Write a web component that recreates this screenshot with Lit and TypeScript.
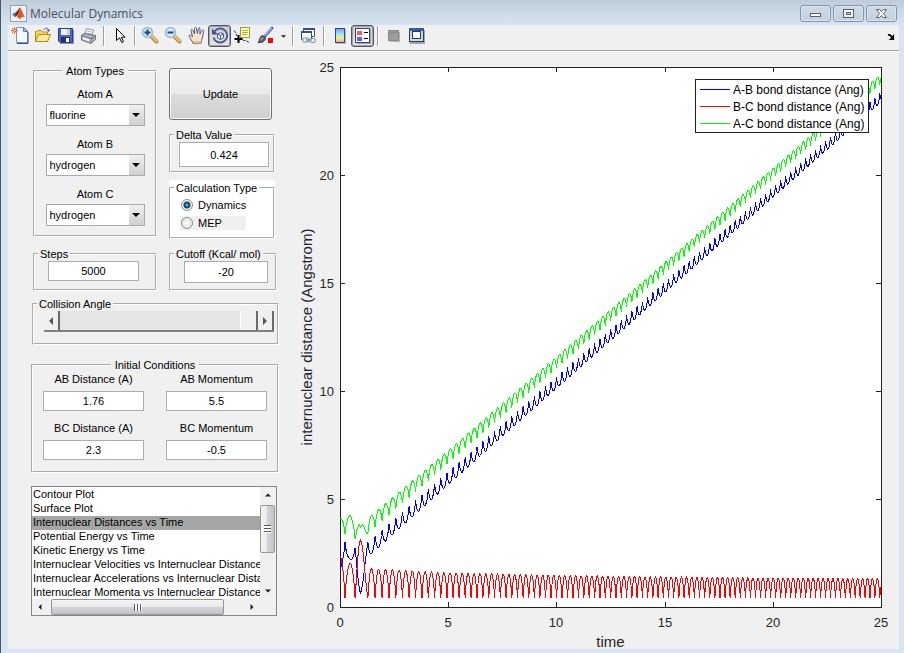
import { LitElement, html, svg, css } from "lit";
import { customElement, property, state } from "lit/decorators.js";
import { classMap } from "lit/directives/class-map.js";

/* ---------- toolbar icons, each on a 20 x 20 grid ---------- */
const icons: Record<string, unknown> = {
  new: svg`
    <path d="M6.500 1.500H14L17.500 5V16.500H6.500Z" fill="#f4f9ff" stroke="#7a94c8"/>
    <path d="M18 6V17.500H7" fill="none" stroke="#34507f"/>
    <path d="M13.500 1.500V5.500H17.500Z" fill="#a9c6ee" stroke="#5a78b8"/>
    <path d="M4.500 1V8M1 4.500H8M2 2L7 7M7 2L2 7" stroke="#e07038" stroke-width="1"/>
    <circle cx="4.500" cy="4.500" r="1.500" fill="#fff2c0" stroke="#d8572a"/>`,
  open: svg`
    <path d="M2.500 15.500V5.500H4L5 4.500H8L9.500 6H14.500V15.500Z" fill="#f5d66b" stroke="#b8860b"/>
    <path d="M2.500 15.500L5.500 8.500H17.500L14.500 15.500Z" fill="#ffec9a" stroke="#b8860b"/>
    <path d="M10.500 4C12 1.500 14.500 1.500 15.500 4" fill="none" stroke="#4a6a9a"/>
    <path d="M13.500 3.500H17.500L15.500 6Z" fill="#4a6a9a"/>`,
  save: svg`
    <path d="M2.500 2.500H16.500V16.500H4L2.500 15Z" fill="#4b63cc" stroke="#2b3c8f"/>
    <rect x="5" y="3" width="9" height="6" fill="#eef3ff"/>
    <rect x="11" y="3" width="3" height="6" fill="#c3d0f2"/>
    <rect x="5" y="11" width="9" height="5" fill="#26306e"/>
    <rect x="10" y="12" width="3" height="4" fill="#fff"/>
    <path d="M17.500 4V17.500H4" fill="none" stroke="#8c94b4"/>`,
  print: svg`
    <path d="M5.500 9L7.500 2.500L14.500 4L12.500 10Z" fill="#fff" stroke="#8a93a8"/>
    <path d="M8 5L12.500 6M7.500 7L12 8" stroke="#8fb0e0"/>
    <path d="M2.500 9.500L5 7.500L16.500 9.500V13.500L12 17.500L2.500 14Z" fill="#b4b6be" stroke="#6d7079"/>
    <path d="M2.500 9.500L12 12.500L16.500 9.500M12 12.500V17" fill="none" stroke="#6d7079"/>
    <path d="M4 12L10.500 14.500" stroke="#f4f4f4" stroke-width="2"/>
    <rect x="13" y="12" width="2" height="1" fill="#62a84e"/>`,
  pointer: svg`
    <path d="M6.500 2.500V14.500L9.500 11.800L11.800 16.500L13.500 15.600L11.400 11.200H15Z" fill="#fff" stroke="#000"/>`,
  zoomin: svg`
    <path d="M11 11L15.500 15.500" stroke="#b98a50" stroke-width="4" stroke-linecap="round"/>
    <path d="M11 10.500L15.500 15" stroke="#f8c070" stroke-width="2" stroke-linecap="round"/>
    <circle cx="6.500" cy="6.500" r="5" fill="#d3ecfa" stroke="#9ab8d4" stroke-width="1.500"/>
    <path d="M3.500 6.500H9.500M6.500 3.500V9.500" stroke="#1c4687" stroke-width="2"/>`,
  zoomout: svg`
    <path d="M11 11L15.500 15.500" stroke="#b98a50" stroke-width="4" stroke-linecap="round"/>
    <path d="M11 10.500L15.500 15" stroke="#f8c070" stroke-width="2" stroke-linecap="round"/>
    <circle cx="6.500" cy="6.500" r="5" fill="#d3ecfa" stroke="#9ab8d4" stroke-width="1.500"/>
    <path d="M3.500 6.500H9.500" stroke="#1c4687" stroke-width="2"/>`,
  pan: svg`
    <path d="M6 17.500C5.500 14.500 2 12 2 9.500C2.500 8.500 4 9 5.500 11L4 4.500C4 3 5.500 3 6 4.500L7.500 8L7.500 2.500C7.500 1 9.200 1 9.500 2.500L10.300 7.500L11.300 2.500C11.600 1.200 13.200 1.500 13 3L12.800 8L15 4.500C16 3.400 17 4.200 16.700 5.500L15.500 11C15 14 14 15 14 17.500Z" fill="#ffe3c4" stroke="#43609a"/>
    <path d="M6.500 17.500H14V15H6Z" fill="#f3b88a"/>`,
  rotate: svg`
    <path d="M4.500 5.500A7 7 0 1 1 3.500 11.500" fill="none" stroke="#4a6090" stroke-width="2"/>
    <path d="M2 2.500V8.500H8Z" fill="#3c5484"/>
    <path d="M7.500 8L10.500 6.500L13.500 8V12L10.500 13.500L7.500 12ZM7.500 8L10.500 9.500L13.500 8M10.500 9.500V13.500" fill="#eef2fa" stroke="#4a6090"/>`,
  datatip: svg`
    <path d="M1 4.500C2.500 6 3 8 4 10M6 14.500C9 11.500 10 15.500 13 14.500L16 16.500" fill="none" stroke="#2020ff" stroke-dasharray="3 1"/>
    <rect x="7.500" y="1.500" width="9" height="10" fill="#ffffb0" stroke="#a89a2c"/>
    <path d="M9 4.500H15M9 6.500H15M9 8.500H14" stroke="#b0a862"/>
    <path d="M5.500 9V17M1.500 13H9.500" stroke="#000" stroke-width="2"/>`,
  brush: svg`
    <path d="M8.500 10.500L16 2" stroke="#5a68ac" stroke-width="3" stroke-linecap="round"/>
    <path d="M8.500 9.500L15.500 2" stroke="#aebcf0" stroke-width="1.500"/>
    <path d="M2 16.500C4.500 14.500 3 11.500 6 9.500L9.500 12C9 15.500 5.500 17 2 16.500Z" fill="#666" stroke="#333"/>
    <path d="M5 14L7 11.500" stroke="#ddd"/>
    <rect x="12" y="12" width="5" height="5" fill="#f00"/>`,
  link: svg`
    <path d="M4.500 2.500H15.500V10.500H4.500Z" fill="#fff" stroke="#33508c"/><path d="M4 3H16" stroke="#33508c" stroke-width="2"/>
    <path d="M2.500 5.500H12.500V13.500H2.500Z" fill="#fff" stroke="#33508c"/><path d="M2 6H13" stroke="#33508c" stroke-width="2"/>
    <rect x="3.500" y="12" width="7" height="4" rx="2" fill="#eef4fa" stroke="#6a86a0"/>
    <rect x="10.500" y="12.500" width="6" height="4" rx="2" fill="#eef4fa" stroke="#6a86a0"/>
    <path d="M7 14H13" stroke="#8ba6bd" stroke-width="2"/>`,
  colorbar: svg`
    <rect x="6" y="3" width="10" height="15" fill="#b8b8bc"/>
    <rect x="5.500" y="2.500" width="9" height="14" fill="url(#spectrum)" stroke="#2e4a8c"/>`,
  legend: svg`
    <rect x="4" y="3" width="14" height="15" fill="#9fa3b0"/>
    <rect x="2.500" y="2.500" width="14" height="14" fill="#fff" stroke="#2e4a8c" />
    <rect x="4" y="5" width="5" height="4" fill="#ef6060"/><rect x="4" y="11" width="5" height="4" fill="#6060ef"/>
    <path d="M11 6.500H15M11 12.500H15" stroke="#000"/>`,
  hide: svg`
    <rect x="6" y="6" width="10" height="10" fill="#b4b4b4"/>
    <rect x="4.500" y="4.500" width="10" height="10" fill="#9c9c9c" stroke="#8a8a8a"/>
    <path d="M5 6.500H14" stroke="#8a8a8a"/>`,
  show: svg`
    <rect x="3" y="4" width="15" height="14" fill="#a0a4ac"/>
    <rect x="2.500" y="2.500" width="14" height="13" fill="#d3d7cc" stroke="#1f3b78"/>
    <path d="M2 3.500H17" stroke="#3a5a9e" stroke-width="3"/>
    <rect x="5.500" y="5.500" width="8" height="7" fill="#fff" stroke="#1f3b78"/>`,
};

/* ---------- trajectory of the collision ---------- */
const SPAN = 25;

interface Sample { t: number; ab: number; bc: number; ac: number; }

function interpolate(points: number[][], t: number): number {
  for (let i = 1; i < points.length; i++) {
    const [t0, v0] = points[i - 1];
    const [t1, v1] = points[i];
    if (t <= t1) return v0 + (v1 - v0) * ((t - t0) / (t1 - t0));
  }
  return points[points.length - 1][1];
}

function trajectory(): Sample[] {
  const centre = [[0, 2.91], [0.23, 3.19], [0.46, 3.24], [0.69, 2.98], [0.95, 2.15], [1.29, 3.2], [25, 24.02]];
  /* turning points of the B-C vibration */
  const turns = [-0.26, 0.23, 0.7, 1.29];
  let last = 1.29;
  while (last < SPAN) {
    last += 0.2 + 0.132 / (1 + (last - 1.29) / 6);
    turns.push(last);
  }
  const out: Sample[] = [];
  const steps = 12;
  for (let k = 0; k + 1 < turns.length; k++) {
    for (let j = 0; j < steps; j++) {
      const u = j / steps;
      const t = turns[k] + (turns[k + 1] - turns[k]) * u;
      if (t < 0 || t > SPAN) continue;
      let top = 1.24 + 0.55 / (1 + (t - 1.29) / 7) - 0.06 * (t / SPAN);
      let phase = u;
      let power = 0.75;
      if (k === 0) top = 2.4;
      if (k === 1) top = 2.03;
      if (k === 2) {
        top = 3.1;
        power = 1.4;
        phase = Math.pow(u, 0.81);
      }
      const bc = 0.4 + (top - 0.4) * Math.pow(Math.max(0, Math.sin(Math.PI * phase)), power);
      const mid = interpolate(centre, t);
      out.push({ t, bc, ab: mid - bc / 2, ac: mid + bc / 2 });
    }
  }
  return out;
}

@customElement("distance-chart")
class DistanceChart extends LitElement {
  static styles = css`
    :host { display: block; position: relative; min-width: 0; overflow: hidden; }
    svg { position: absolute; inset: 0; width: 100%; height: 100%; }
    text { font-family: "Liberation Sans", Arial, sans-serif; fill: #262626; }
    .tick { font-size: 13px; }
    .axis { font-size: 15px; }
    .key { font-size: 12px; fill: #000; }
    .frame { fill: #fff; stroke: #202020; shape-rendering: crispEdges; }
    .mark { stroke: #202020; shape-rendering: crispEdges; }
    .trace { fill: none; shape-rendering: crispEdges; }
    .ab { stroke: #0000ff; }
    .bc { stroke: #ff0000; }
    .ac { stroke: #00ff00; }
  `;
  @state() private w = 609;
  @state() private h = 597;
  private data = trajectory();
  private watcher = new ResizeObserver(([e]) => {
    this.w = Math.round(e.contentRect.width);
    this.h = Math.round(e.contentRect.height);
  });
  connectedCallback() { super.connectedCallback(); this.watcher.observe(this); }
  disconnectedCallback() { super.disconnectedCallback(); this.watcher.disconnect(); }

  render() {
    const left = 50, top = 15, right = this.w - 18, bottom = this.h - 42;
    const X = (t: number) => left + (t / SPAN) * (right - left);
    const Y = (v: number) => bottom - (v / SPAN) * (bottom - top);
    const line = (key: "ab" | "bc" | "ac") =>
      this.data.map((d) => `${X(d.t).toFixed(1)},${Y(d[key]).toFixed(1)}`).join(" ");
    const ticks = [0, 5, 10, 15, 20, 25];
    const keys = [["ab", "A-B bond distance (Ang)"], ["bc", "B-C bond distance (Ang)"], ["ac", "A-C bond distance (Ang)"]];
    const kx = right - 186, ky = top + 12;
    const midY = (top + bottom) / 2;
    return html`<svg role="img" aria-label="Internuclear distances vs time">
      <rect class="frame" x=${left} y=${top} width=${right - left} height=${bottom - top}></rect>
      ${ticks.map((v) => { const x = Math.round(X(v)), y = Math.round(Y(v)); return svg`
        <path class="mark" d="M${x} ${bottom}v-5M${x} ${top}v5M${left} ${y}h5M${right} ${y}h-5"></path>
        <text class="tick" x=${x} y=${bottom + 20} text-anchor="middle">${v}</text>
        <text class="tick" x=${left - 6} y=${y + 5} text-anchor="end">${v}</text>`; })}
      ${(["ab", "bc", "ac"] as const).map((k) => svg`<polyline class="trace ${k}" points=${line(k)}></polyline>`)}
      <text class="axis" x=${(left + right) / 2} y=${bottom + 40} text-anchor="middle">time</text>
      <text class="axis" x="0" y="0" text-anchor="middle" transform="translate(22 ${midY}) rotate(-90)">internuclear distance (Angstrom)</text>
      <rect class="frame" x=${kx} y=${ky} width="173" height="53"></rect>
      ${keys.map(([c, label], i) => svg`
        <path class="trace ${c}" d="M${kx + 5} ${ky + 10 + i * 17}h30"></path>
        <text class="key" x=${kx + 38} y=${ky + 15 + i * 17}>${label}</text>`)}
    </svg>`;
  }
}

@customElement("tool-button")
class ToolButton extends LitElement {
  static styles = css`
    :host { display: block; }
    button { display: flex; align-items: center; justify-content: center; box-sizing: border-box; width: 23px; height: 22px; padding: 0; border: 1px solid transparent; border-radius: 3px; background: none; }
    .pressed { border-color: #55565a; background: linear-gradient(#cfcfd2, #e6e6e8); box-shadow: inset 0 0 0 1px #a4a4a8; }
    svg { width: 20px; height: 20px; flex: none; }
  `;
  @property() name = "";
  @property() label = "";
  @property({ type: Boolean }) pressed = false;
  render() {
    return html`<button class=${classMap({ pressed: this.pressed })} aria-label=${this.label} aria-pressed=${this.pressed}>
      <svg viewBox="0 0 20 20" fill="none">
        <defs><linearGradient id="spectrum" x1="0" y1="0" x2="0" y2="1">
          <stop offset="0" stop-color="#8c8cf5"/><stop offset=".35" stop-color="#8ce8f0"/>
          <stop offset=".7" stop-color="#f2f08c"/><stop offset="1" stop-color="#f59a8c"/>
        </linearGradient></defs>
        ${icons[this.name]}
      </svg></button>`;
  }
}

const triangle = (d: string) => html`<svg class="tri" viewBox="0 0 8 8" aria-hidden="true"><path d=${d}></path></svg>`;
const LEFT = "M6 0V8L2 4Z", RIGHT = "M2 0V8L6 4Z", UP = "M0 6H8L4 2Z", DOWN = "M0 2H8L4 6Z";

@customElement("app-root")
class AppRoot extends LitElement {
  static styles = css`
    * { box-sizing: border-box; }
    :host { display: flex; flex-direction: column; box-sizing: border-box; min-height: 100vh; padding: 0 5px 4px 7px; border-left: 1px solid #50555c; background: #d7e4f2; font: 11px/14px "Liberation Sans", Arial, sans-serif; color: #000; }
    button, input, select { font: inherit; color: inherit; margin: 0; border-radius: 0; }
    .title { display: flex; align-items: center; height: 25px; margin: 0 -5px 0 -7px; padding: 2px 7px 0 9px; background: linear-gradient(#bfccda, #d7e4f2); }
    .title .logo { width: 17px; height: 17px; margin-right: 3px; }
    .title h1 { flex: 1; margin: 0; font: 12px/16px "Open Sans", "Noto Sans", sans-serif; color: #4a5158; }
    .controls { display: flex; gap: 2px; }
    .controls button { display: flex; align-items: center; justify-content: center; width: 31px; height: 17px; padding: 0; border: 1px solid #8593ad; border-radius: 3px; background: linear-gradient(#d0dae6, #c4d0de); box-shadow: inset 0 0 0 1px #dde6f0; }
    .controls svg { width: 13px; height: 11px; }
    .toolbar { display: flex; align-items: center; height: 27px; padding-bottom: 4px; background: #f0f0f0; border-bottom: 1px solid #fff; box-shadow: inset 0 -1px #a0a0a0; }
    .sep { width: 2px; height: 20px; margin: 0 3px; border-left: 1px solid #a0a0a0; border-right: 1px solid #fff; }
    .drop { width: 12px; height: 20px; padding: 0; border: 0; background: none; }
    .drop .tri { width: 5px; height: 5px; }
    .undock { width: 17px; height: 16px; margin-left: auto; padding: 0; border: 0; background: none; }
    .undock svg { display: block; width: 8px; height: 8px; margin: 2px auto 0; }
    .tri { display: block; width: 8px; height: 8px; margin: auto; fill: #202020; }

    main { flex: 1; display: grid; grid-template-columns: 282px minmax(0, 1fr); background: #f0f0f0; }
    .side { display: flex; flex-direction: column; padding: 12px 11px 20px 23px; }
    fieldset { min-width: 0; margin: 0; padding: 0; border: 2px groove #fff; }
    legend { padding: 0 2px; margin-left: 3px; }
    .centred { margin: 0 auto; padding: 0 4px; }
    .pair { display: grid; grid-template-columns: 124px 106px; gap: 12px; margin-left: 2px; }
    .col { display: flex; flex-direction: column; gap: 10px; }
    .right { padding-top: 4px; gap: 8px; }
    .atoms { height: 173px; padding-top: 9px; }
    .atom { display: flex; flex-direction: column; align-items: center; gap: 3px; margin-bottom: 11px; }
    .combo { position: relative; width: 99px; height: 22px; }
    .combo select { appearance: none; width: 100%; height: 100%; padding: 0 18px 0 3px; border: 1px solid #a9a9b1; background: #fff; }
    .combo .arrow { position: absolute; top: 1px; right: 1px; bottom: 1px; width: 15px; display: flex; background: linear-gradient(#f0f0f0, #cfcfcf); pointer-events: none; }
    .combo .tri { fill: #000; }
    .text { display: block; height: 20px; padding: 0; border: 1px solid #abadb3; background: #fff; text-align: center; }
    .update { height: 52px; width: 103px; border: 1px solid #707070; border-radius: 3px; background: linear-gradient(#f2f2f2, #ebebeb 50%, #dddddd 50%, #cfcfcf); box-shadow: inset 0 0 0 1px #fafafa; }
    .delta { height: 45px; }
    .delta .text { width: 90px; height: 25px; margin: 0 0 0 8px; }
    .calc { height: 58px; background: #fff; box-shadow: 0 -7px #fff; }
    .choice { display: flex; align-items: center; gap: 5px; width: 66px; height: 14px; margin: 4px 0 0 9px; padding-left: 1px; }
    .choice:first-of-type { margin-top: 3px; }
    .dim { background: #f0f0f0; }
    .choice input { appearance: none; flex: none; width: 12px; height: 12px; border: 1px solid #8e8f8f; border-radius: 50%; background: radial-gradient(#fdfdfd 10%, #c8ccd0); box-shadow: inset 0 0 0 1px #f4f4f4; }
    .choice input:checked { background: radial-gradient(circle, #6fd0f2 0, #12608e 2px, #103a5c 3px, #dfe6ea 4px); }
    .short { height: 44px; }
    .short .text { width: 91px; margin: 0 0 0 13px; }
    .cutoff { margin-right: -2px; }
    .cutoff .text { width: 84px; height: 22px; }
    .angle { height: 48px; margin: 6px 0 0 1px; }
    .slider { display: flex; height: 21px; margin: 0 3px 0 10px; border-bottom: 2px solid #808080; }
    .slider button { width: 16px; padding: 0; border: 0; border-right: 2px solid #696969; background: #f0f0f0; }
    .slider .tri { fill: #555; }
    .slider input { appearance: none; flex: 1; min-width: 0; height: 19px; background: #e5e5e5; }
    .slider input::-webkit-slider-thumb { appearance: none; width: 18px; height: 19px; border: 0; border-left: 1px solid #fff; border-right: 2px solid #696969; background: #f0f0f0; }
    .initial { height: 115px; margin-top: 13px; }
    .grid { display: grid; grid-template-columns: 101px 101px; column-gap: 22px; row-gap: 10px; margin: 0 0 0 10px; }
    .entry { display: flex; flex-direction: column; gap: 5px; text-align: center; }
    .list { display: grid; grid-template: 112px 16px / minmax(0, 1fr) 16px; height: 130px; width: 246px; margin-top: 13px; border: 1px solid #828790; background: #f0f0f0; }
    .list select { appearance: none; grid-row: 1; width: 100%; height: 112px; padding: 1px 0 0; border: 0; outline: 0; background: #fff; overflow: hidden; }
    .list option { padding: 0 1px; min-height: 14px; line-height: 14px; white-space: nowrap; color: #000; }
    .list option:checked { background: #a6a6a6 linear-gradient(#a6a6a6, #a6a6a6); color: #000; }
    .bar { display: flex; }
    .bar button { flex: none; width: 16px; height: 16px; padding: 0; border: 0; background: none; }
    .bar .tri { width: 6px; height: 6px; }
    .vertical { flex-direction: column; justify-content: space-between; }
    .thumb { display: flex; align-items: center; justify-content: center; border: 1px solid #979797; border-radius: 2px; }
    .vertical .thumb { height: 48px; margin: 2px 1px 30px 0; background: linear-gradient(90deg, #f5f5f5, #e9e9eb 50%, #d4d4d8 50%, #c4c4c8); }
    .across .thumb { flex: 1; margin: 0 20px 0 3px; background: linear-gradient(#f5f5f5, #e9e9eb 50%, #d4d4d8 50%, #c4c4c8); }
    .grip { width: 8px; height: 7px; background: repeating-linear-gradient(90deg, #55585e 0 1px, #fff 1px 3px); }
    .vertical .grip { width: 7px; height: 8px; background: repeating-linear-gradient(#55585e 0 1px, #fff 1px 3px); }
  `;

  private tool(name: string, label: string, pressed = false) {
    return html`<tool-button name=${name} label=${label} ?pressed=${pressed}></tool-button>`;
  }
  private atom(id: string, value: string) {
    return html`<div class="atom"><label for="atom${id}">Atom ${id}</label>
      <div class="combo"><select id="atom${id}">
        ${["fluorine", "hydrogen", "chlorine"].map((a) => html`<option ?selected=${a === value}>${a}</option>`)}
      </select><span class="arrow">${triangle(DOWN)}</span></div></div>`;
  }
  private entry(label: string, value: string) {
    return html`<label class="entry">${label}<input class="text" .value=${value}></label>`;
  }

  render() {
    const plots = ["Contour Plot", "Surface Plot", "Internuclear Distances vs Time", "Potential Energy vs Time", "Kinetic Energy vs Time",
      "Internuclear Velocities vs Internuclear Distance", "Internuclear Accelerations vs Internuclear Distance", "Internuclear Momenta vs Internuclear Distance"];
    const sep = html`<span class="sep"></span>`;
    return html`
      <header class="title">
        <svg class="logo" viewBox="0 0 17 17"><rect x=".5" y=".5" width="16" height="16" fill="#eef1f5" stroke="#93a0ae"/>
          <path d="M2 9.500L6 7L8 9L5 12Z" fill="#3e7cb8"/><path d="M6 7C8 6 8.500 3 10 2.500L8.500 9.500L5 12Z" fill="#7a3020"/>
          <path d="M10 2.500C11.500 4 13 9 15 12.500C13 11 11.500 11.500 10 14.500C9 13.500 8 11.500 6.500 12.500C8.500 10 9 6 10 2.500Z" fill="#e0561c"/></svg>
        <h1>Molecular Dynamics</h1>
        <div class="controls">
          <button aria-label="Minimize"><svg viewBox="0 0 13 11"><rect x="1.500" y="5.500" width="10" height="3" fill="#fff" stroke="#5a6070"/></svg></button>
          <button aria-label="Maximize"><svg viewBox="0 0 13 11"><rect x="1.500" y="1.500" width="10" height="8" fill="#f4f6f8" stroke="#5a6070"/><rect x="4.500" y="4.500" width="4" height="2" fill="#c8d2de" stroke="#5a6070"/></svg></button>
          <button aria-label="Close"><svg viewBox="0 0 13 11"><path d="M1.500 1.500H4.500L6.500 3.500L8.500 1.500H11.500L8.500 5.500L11.500 9.500H8.500L6.500 7.500L4.500 9.500H1.500L4.500 5.500Z" fill="#fff" stroke="#5a6070"/></svg></button>
        </div>
      </header>
      <nav class="toolbar" aria-label="Figure toolbar">
        ${this.tool("new", "New figure")}${this.tool("open", "Open file")}${this.tool("save", "Save figure")}${this.tool("print", "Print figure")}
        ${sep}${this.tool("pointer", "Edit plot")}${sep}
        ${this.tool("zoomin", "Zoom in")}${this.tool("zoomout", "Zoom out")}${this.tool("pan", "Pan")}${this.tool("rotate", "Rotate 3D", true)}${this.tool("datatip", "Data cursor")}${this.tool("brush", "Brush data")}
        <button class="drop" aria-label="Brush colour">${triangle(DOWN)}</button>
        ${sep}${this.tool("link", "Link plot")}${sep}
        ${this.tool("colorbar", "Insert colorbar")}${this.tool("legend", "Insert legend", true)}${sep}
        ${this.tool("hide", "Hide plot tools")}${this.tool("show", "Show plot tools")}
        <button class="undock" aria-label="Dock figure"><svg viewBox="0 0 9 9"><path d="M1 2H3L6 5" fill="none" stroke="#000" stroke-width="2"/><path d="M8 1V8H2Z" fill="#000"/></svg></button>
      </nav>
      <main>
        <section class="side">
          <div class="pair">
            <div class="col">
              <fieldset class="atoms"><legend class="centred">Atom Types</legend>
                ${this.atom("A", "fluorine")}${this.atom("B", "hydrogen")}${this.atom("C", "hydrogen")}
              </fieldset>
              <fieldset class="short"><legend>Steps</legend><input class="text" aria-label="Steps" .value=${"5000"}></fieldset>
            </div>
            <div class="col right">
              <button class="update">Update</button>
              <fieldset class="delta"><legend>Delta Value</legend><input class="text" aria-label="Delta Value" .value=${"0.424"}></fieldset>
              <fieldset class="calc"><legend>Calculation Type</legend>
                <label class="choice"><input type="radio" name="calc" checked>Dynamics</label>
                <label class="choice dim"><input type="radio" name="calc">MEP</label>
              </fieldset>
              <fieldset class="short cutoff"><legend>Cutoff (Kcal/ mol)</legend><input class="text" aria-label="Cutoff" .value=${"-20"}></fieldset>
            </div>
          </div>
          <fieldset class="angle"><legend>Collision Angle</legend>
            <div class="slider"><button aria-label="Decrease">${triangle(LEFT)}</button>
              <input type="range" aria-label="Collision Angle" min="0" max="180" .value=${"180"}>
              <button aria-label="Increase">${triangle(RIGHT)}</button></div>
          </fieldset>
          <fieldset class="initial"><legend class="centred">Initial Conditions</legend>
            <div class="grid">${this.entry("AB Distance (A)", "1.76")}${this.entry("AB Momentum", "5.5")}${this.entry("BC Distance (A)", "2.3")}${this.entry("BC Momentum", "-0.5")}</div>
          </fieldset>
          <div class="list">
            <select size="8" aria-label="Plot type">${plots.map((p, i) => html`<option ?selected=${i === 2}>${p}</option>`)}</select>
            <div class="bar vertical"><button aria-label="Scroll up">${triangle(UP)}</button><span class="thumb"><i class="grip"></i></span><button aria-label="Scroll down">${triangle(DOWN)}</button></div>
            <div class="bar across"><button aria-label="Scroll left">${triangle(LEFT)}</button><span class="thumb"><i class="grip"></i></span><button aria-label="Scroll right">${triangle(RIGHT)}</button></div>
          </div>
        </section>
        <distance-chart></distance-chart>
      </main>`;
  }
}
